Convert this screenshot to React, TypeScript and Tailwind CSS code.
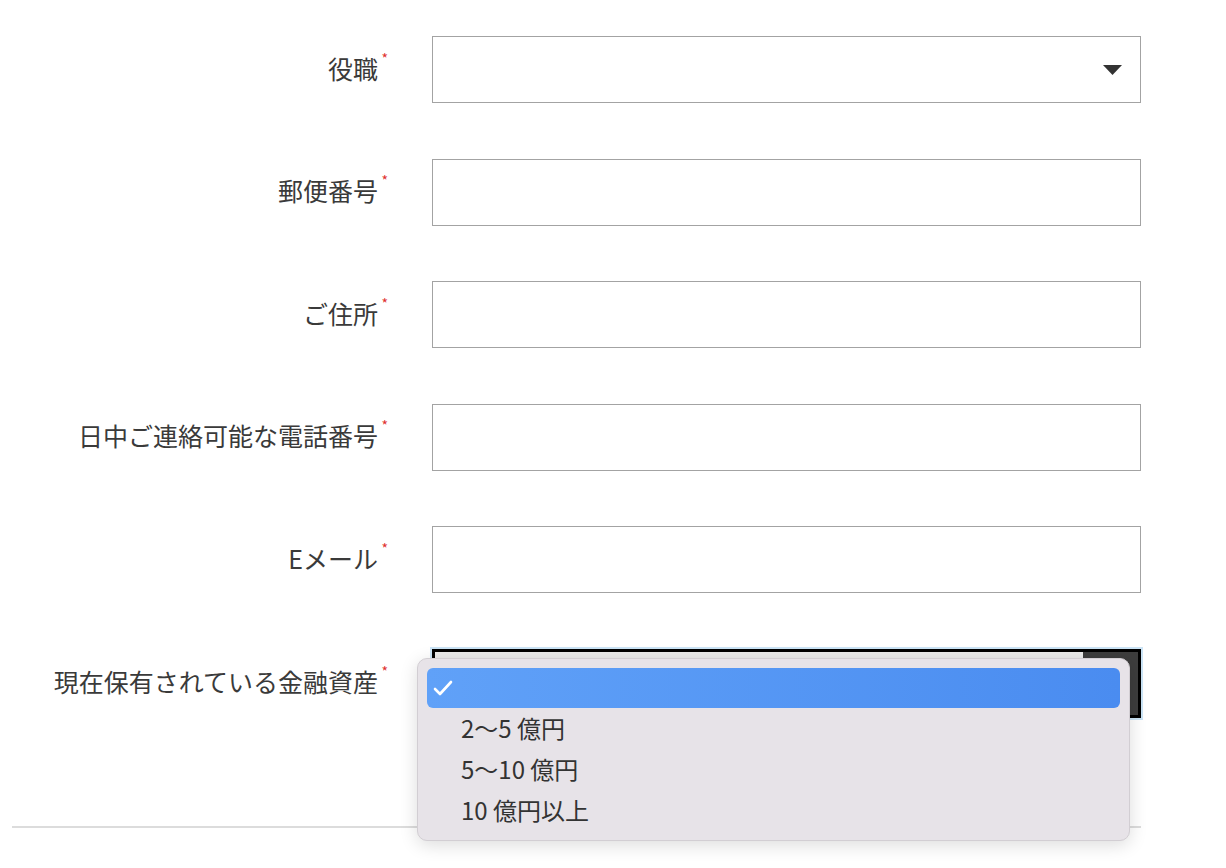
import React from "react";

const font = { fontFamily: '"Noto Sans CJK JP", "Noto Sans", sans-serif' };

type Field = { label: string; kind: "select" | "text" };

const fields: Field[] = [
  { label: "役職", kind: "select" },
  { label: "郵便番号", kind: "text" },
  { label: "ご住所", kind: "text" },
  { label: "日中ご連絡可能な電話番号", kind: "text" },
  { label: "Eメール", kind: "text" },
];

const options = ["2～5 億円", "5～10 億円", "10 億円以上"];

const Label = ({ text }: { text: string }) => (
  <div className="w-[366px] flex justify-end items-center -mt-[3px]">
    <span className="text-[25px] leading-none text-[#3a3a3a] relative">
      {text}
      <span className="absolute -right-[10px] -top-[5px] text-[14px] text-[#e0312f]">*</span>
    </span>
  </div>
);

const App: React.FC = (): React.JSX.Element => {
  return (
    <div className="w-[1226px] h-[868px] bg-white overflow-hidden" style={font}>
      <div className="pt-[36px] pl-[12px] flex flex-col gap-[55.5px]">
        {fields.map((f) => (
          <div key={f.label} className="flex items-center">
            <Label text={f.label} />
            <div className="ml-[54px] w-[709px] h-[67px] border-[1.5px] border-[#a3a3a3] bg-white flex items-center justify-end pr-[18px]">
              {f.kind === "select" && (
                <svg width="19" height="10" viewBox="0 0 19 10">
                  <path d="M0 0 H19 L9.5 10 Z" fill="#333" />
                </svg>
              )}
            </div>
          </div>
        ))}

        {/* focused select with native popup open */}
        <div className="flex items-center">
          <Label text="現在保有されている金融資産" />
          <div className="ml-[54px] relative">
            <div className="w-[709px] h-[69px] border-[3px] border-black bg-[#ebebeb] flex justify-end shadow-[0_0_0_2px_rgba(140,195,235,0.45)]">
              <div className="w-[55px] bg-[#3d3d3d]" />
            </div>
            <div className="absolute left-[-15px] top-[9px] w-[713px] h-[183px] rounded-[10px] bg-[#e7e3e8] border border-[#d2ced3] shadow-[0_4px_18px_rgba(0,0,0,0.14)] p-[9px]">
              <div className="h-[40px] rounded-[6px] bg-gradient-to-r from-[#60a1f8] to-[#4a8cf0] flex items-center pl-[6px]">
                <svg width="20" height="16" viewBox="0 0 20 16">
                  <path d="M2 9 L7 14 L18 2" fill="none" stroke="white" strokeWidth="2.6" strokeLinecap="round" strokeLinejoin="round" />
                </svg>
              </div>
              {options.map((o) => (
                <div key={o} className="h-[41px] flex items-center pl-[34px] text-[24px] text-[#333]">
                  {o}
                </div>
              ))}
            </div>
          </div>
        </div>
      </div>

      <div className="ml-[12px] mt-[108px] w-[1129px] h-[2px] bg-[#dcdcdc]" />
    </div>
  );
};

export default App;
